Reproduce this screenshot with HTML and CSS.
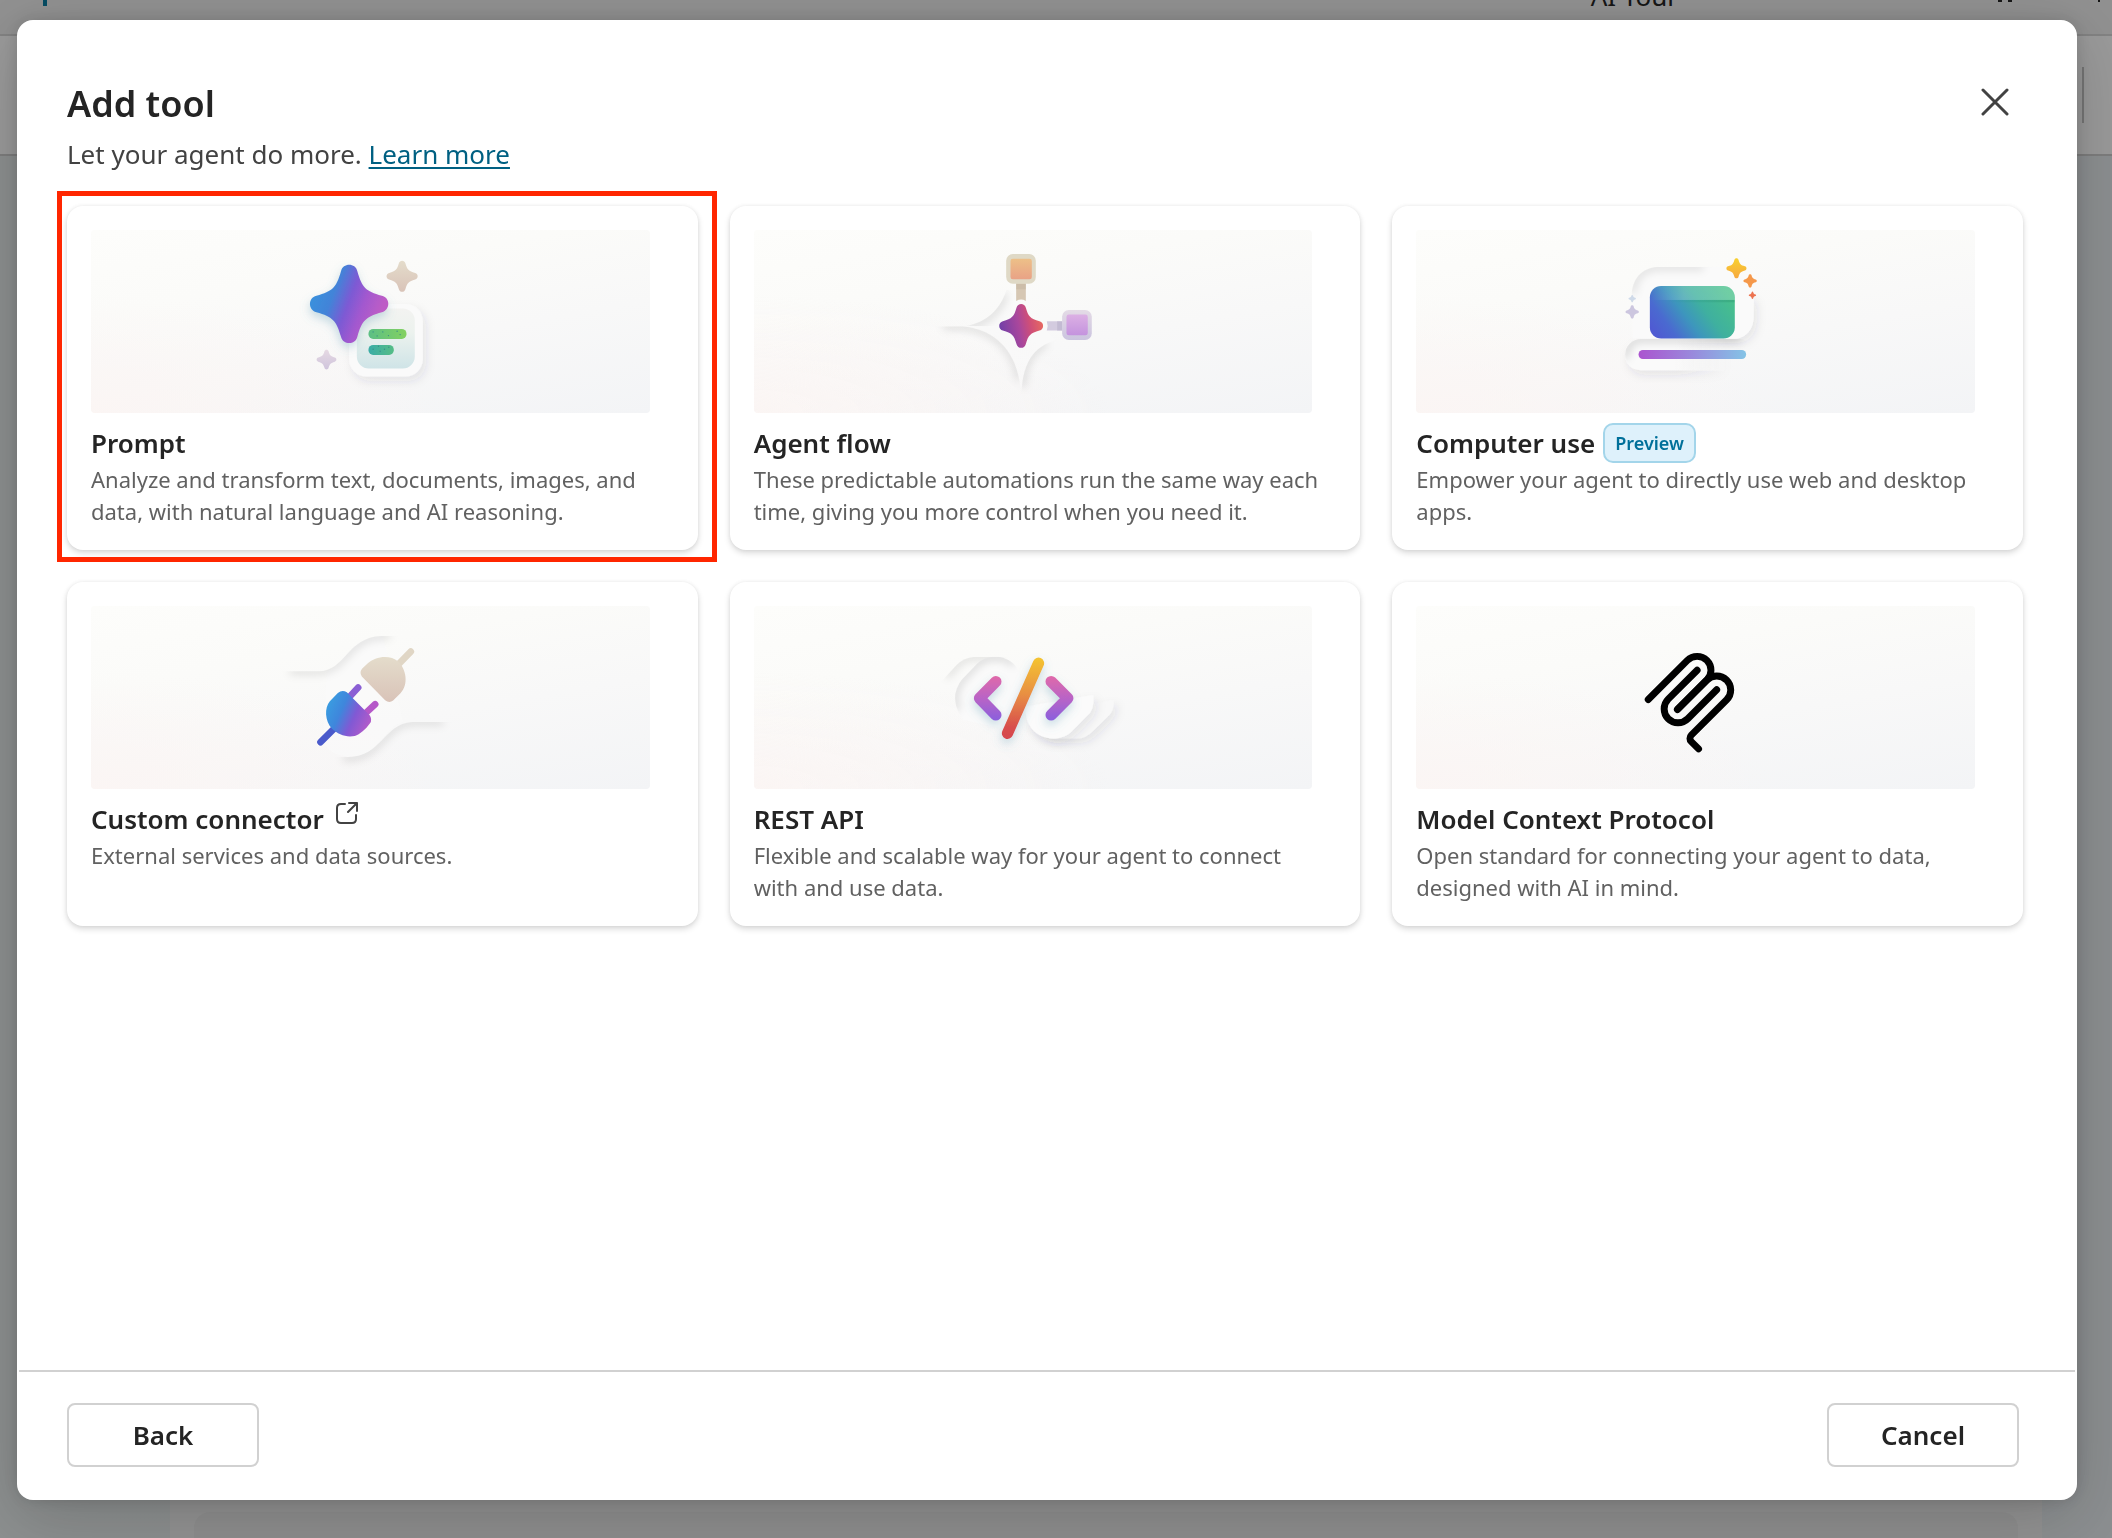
FILE: index.html
```html
<!DOCTYPE html>
<html lang="en">
<head>
<meta charset="utf-8">
<meta name="viewport" content="width=device-width, initial-scale=1">
<title>Add tool</title>
<link rel="stylesheet" href="styles.css">
</head>
<body>
<svg class="defs" aria-hidden="true">
  <defs>
    <path id="star" d="M-21-84C-16-106 16-106 21-84C33-42 42-33 84-21C106-16 106 16 84 21C42 33 33 42 21 84C16 106-16 106-21 84C-33 42-42 33-84 21C-106 16-106-16-84-21C-42-33-33-42-21-84Z"/>
    <linearGradient id="blueviolet" x1="0.1" y1="0.3" x2="0.9" y2="0.6">
      <stop offset="0" stop-color="#3a8fdc"/><stop offset=".25" stop-color="#4383d8"/><stop offset=".5" stop-color="#7c5ad4"/><stop offset=".72" stop-color="#a259cf"/><stop offset="1" stop-color="#bd5cc6"/>
    </linearGradient>
    <linearGradient id="sand" x1="0" y1="0" x2="0" y2="1"><stop offset="0" stop-color="#e4dccb"/><stop offset="1" stop-color="#d9c3b8"/></linearGradient>
    <linearGradient id="lilac" x1="0" y1="0" x2="0" y2="1"><stop offset="0" stop-color="#e6d9e3"/><stop offset="1" stop-color="#cfc4dc"/></linearGradient>
    <linearGradient id="paper" x1="0" y1="0" x2="0" y2="1"><stop offset="0" stop-color="#f3f3f1"/><stop offset=".4" stop-color="#ecf2ee"/><stop offset="1" stop-color="#cfe4e7"/></linearGradient>
    <linearGradient id="greenA" x1="0" y1="0" x2="1" y2="0"><stop offset="0" stop-color="#5cbf85"/><stop offset="1" stop-color="#83d160"/></linearGradient>
    <linearGradient id="greenB" x1="0" y1="0" x2="1" y2="0"><stop offset="0" stop-color="#3aaca6"/><stop offset="1" stop-color="#55bd86"/></linearGradient>
    <linearGradient id="ember" x1="0" y1=".6" x2="1" y2=".4"><stop offset="0" stop-color="#6f3fa8"/><stop offset=".45" stop-color="#a9479c"/><stop offset=".7" stop-color="#cf4f78"/><stop offset="1" stop-color="#e86a60"/></linearGradient>
    <linearGradient id="peach" x1="0" y1="0" x2="0" y2="1"><stop offset="0" stop-color="#edc088"/><stop offset="1" stop-color="#e9a286"/></linearGradient>
    <linearGradient id="orchid" x1="0" y1="0" x2="0" y2="1"><stop offset="0" stop-color="#dcb0e4"/><stop offset="1" stop-color="#c493de"/></linearGradient>
    <linearGradient id="violetEdge" x1="0" y1="0" x2="0" y2="1"><stop offset="0" stop-color="#e4dbe6"/><stop offset="1" stop-color="#cbc4df"/></linearGradient>
    <linearGradient id="screen" x1="0" y1=".75" x2="1" y2=".3"><stop offset="0" stop-color="#4f5bd2"/><stop offset=".18" stop-color="#4a6ad0"/><stop offset=".42" stop-color="#3d96bd"/><stop offset=".65" stop-color="#3fb09f"/><stop offset="1" stop-color="#48c08b"/></linearGradient>
    <linearGradient id="sheen" x1="0" y1="0" x2="1" y2="0"><stop offset="0" stop-color="#fff" stop-opacity="0"/><stop offset=".4" stop-color="#fff" stop-opacity=".2"/><stop offset="1" stop-color="#fff" stop-opacity=".22"/></linearGradient>
    <linearGradient id="crease" x1="0" y1="0" x2="1" y2="0"><stop offset="0" stop-color="#1a7a60" stop-opacity="0"/><stop offset="1" stop-color="#1a7a60" stop-opacity=".25"/></linearGradient>
    <linearGradient id="keys" x1="0" y1="0" x2="1" y2="0"><stop offset="0" stop-color="#ab54cf"/><stop offset=".5" stop-color="#9989dc"/><stop offset="1" stop-color="#84c3e6"/></linearGradient>
    <linearGradient id="gold" x1="0" y1="0" x2="0" y2="1"><stop offset="0" stop-color="#f8d12f"/><stop offset="1" stop-color="#f7a840"/></linearGradient>
    <linearGradient id="base" x1="0" y1="0" x2="1" y2="0"><stop offset="0" stop-color="#fafafa"/><stop offset=".4" stop-color="#fafafa"/><stop offset=".8" stop-color="#fafafa" stop-opacity="0"/></linearGradient>
    <linearGradient id="slash" gradientUnits="userSpaceOnUse" x1="0" y1="143" x2="0" y2="387"><stop offset="0" stop-color="#f4c430"/><stop offset=".45" stop-color="#e88f43"/><stop offset=".85" stop-color="#d84f4d"/><stop offset="1" stop-color="#d5474f"/></linearGradient>
    <linearGradient id="angle" gradientUnits="userSpaceOnUse" x1="0" y1="198" x2="0" y2="332"><stop offset="0" stop-color="#e069a9"/><stop offset=".5" stop-color="#b964c6"/><stop offset="1" stop-color="#8a60dd"/></linearGradient>
    <linearGradient id="plug" gradientUnits="userSpaceOnUse" x1="205" y1="285" x2="335" y2="345"><stop offset="0" stop-color="#3a9be0"/><stop offset=".3" stop-color="#3f86dc"/><stop offset=".6" stop-color="#8159d4"/><stop offset="1" stop-color="#b85bc8"/></linearGradient>
    <filter id="glow" x="-40%" y="-40%" width="180%" height="180%"><feDropShadow dx="-2" dy="14" stdDeviation="14" flood-color="#5a9ab4" flood-opacity=".32"/></filter>
    <filter id="soft" x="-40%" y="-40%" width="180%" height="180%"><feDropShadow dx="10" dy="14" stdDeviation="14" flood-color="#404050" flood-opacity=".1"/></filter>
    <filter id="blur" x="-40%" y="-40%" width="180%" height="180%"><feGaussianBlur stdDeviation="12"/></filter>
  </defs>
</svg>

<div class="page">
  <header class="topbar">
    <span class="topbar-mark"></span>
    <span class="topbar-name">AI Tour</span>
    <span class="topbar-dots"></span>
    <span class="topbar-tick"></span>
  </header>
  <div class="toolbar"><span class="toolbar-rule"></span></div>
  <main class="canvas"><section class="panel"><div class="panel-box"></div></section></main>
</div>
<div class="scrim"></div>

<section class="dialog" role="dialog" aria-modal="true" aria-labelledby="dialog-title">
  <div class="content">
    <header class="head">
      <div>
        <h1 class="title" id="dialog-title">Add tool</h1>
        <p class="subtitle">Let your agent do more. <a class="link" href="#">Learn more</a></p>
      </div>
      <button class="close" type="button" aria-label="Close">
        <svg viewBox="0 0 28 28" width="28" height="28"><path d="M2 2L26 26M26 2L2 26"/></svg>
      </button>
    </header>

    <div class="grid">
      <div class="highlighted">
        <article class="card">
          <svg class="art" viewBox="0 0 559 183" aria-hidden="true"><g transform="translate(199 10) scale(.3333)">
            <rect x="178" y="192" width="221" height="218" rx="52" fill="#fafafa" filter="url(#soft)"/>
            <rect x="201" y="206" width="174" height="180" rx="36" fill="url(#paper)"/>
            <g filter="url(#glow)"><use href="#star" transform="translate(178 192) scale(1.17)" fill="url(#blueviolet)"/></g>
            <use href="#star" transform="translate(337 109) scale(.465)" fill="url(#sand)"/>
            <use href="#star" transform="translate(110 359) scale(.295)" fill="url(#lilac)"/>
            <rect x="236" y="267" width="114" height="30" rx="14" fill="url(#greenA)"/>
            <rect x="236" y="315" width="76" height="30" rx="14" fill="url(#greenB)"/>
            <g fill="#388e8a"><circle cx="250" cy="276" r="2"/><circle cx="262" cy="288" r="2"/><circle cx="279" cy="276" r="2"/><circle cx="296" cy="287" r="2"/><circle cx="322" cy="274" r="2"/><circle cx="331" cy="284" r="2"/><circle cx="250" cy="328" r="2"/><circle cx="266" cy="319" r="2"/><circle cx="271" cy="334" r="2"/><circle cx="284" cy="328" r="2"/><circle cx="297" cy="322" r="2"/></g>
          </g></svg>
          <h2 class="name">Prompt</h2>
          <p class="text">Analyze and transform text, documents, images, and data, with natural language and AI reasoning.</p>
        </article>
      </div>

      <article class="card">
        <svg class="art" viewBox="0 0 559 183" aria-hidden="true">
          <defs>
            <clipPath id="flowB"><path d="M90 289H190C290 300 364 370 364 515H90Z"/></clipPath>
            <clipPath id="flowC"><path d="M364 515C364 400 400 350 468 332V515Z"/></clipPath>
            <clipPath id="flowD"><path d="M200 288C262 276 300 240 320 180L400 180V290Z"/></clipPath>
          </defs>
          <g transform="translate(146 0) scale(.3333)">
            <path d="M200 288C262 276 300 240 320 180L470 330C400 350 364 400 364 500C364 370 290 300 200 288Z" fill="#fafafa" opacity=".4"/>
            <g clip-path="url(#flowD)"><path d="M205 290C262 276 300 240 316 190" fill="none" stroke="#000" stroke-opacity=".13" stroke-width="18" filter="url(#blur)"/></g>
            <g clip-path="url(#flowB)"><path d="M130 289H190C290 300 350 370 358 450" fill="none" stroke="#000" stroke-opacity=".12" stroke-width="18" filter="url(#blur)"/></g>
            <g clip-path="url(#flowC)"><path d="M368 470C366 400 400 355 440 340" fill="none" stroke="#000" stroke-opacity=".12" stroke-width="20" filter="url(#blur)"/></g>
            <path d="M349 160H378V213Q364 205 349 213Z" fill="#d6c7b3"/>
            <path d="M349 160H378V178H349Z" fill="#c2b4a0" opacity=".5"/>
            <rect x="319" y="72" width="89" height="89" rx="20" fill="#dfd9c6"/>
            <rect x="332" y="86" width="64" height="62" rx="7" fill="url(#peach)"/>
            <path d="M441 274H488V302H441Q446 288 441 274Z" fill="#d3cbdf"/>
            <path d="M472 274H488V302H472Z" fill="#b9b0cc" opacity=".6"/>
            <rect x="487" y="240" width="89" height="90" rx="20" fill="url(#violetEdge)"/>
            <rect x="500" y="254" width="64" height="62" rx="7" fill="url(#orchid)"/>
            <use href="#star" transform="translate(364 288) scale(.655)" fill="url(#ember)"/>
          </g></svg>
        <h2 class="name">Agent flow</h2>
        <p class="text">These predictable automations run the same way each time, giving you more control when you need it.</p>
      </article>

      <article class="card">
        <svg class="art" viewBox="0 0 559 183" aria-hidden="true">
          <defs>
            <clipPath id="lapA"><path d="M125 200C125 145 160 111 205 111H400V230H125Z"/></clipPath>
            <clipPath id="lapB"><rect x="106" y="327" width="390" height="94" rx="47"/></clipPath>
            <clipPath id="lapC"><rect x="180" y="168" width="255" height="158" rx="34"/></clipPath>
          </defs>
          <g transform="translate(174 0) scale(.3333)">
            <path d="M491 200V262C491 300 465 326 432 326H200V200Z" fill="#fafafa" filter="url(#soft)"/>
            <path d="M153 421C125 421 106 402 106 374S125 327 153 327H480V421Z" fill="url(#base)" filter="url(#soft)"/>
            <path d="M128 190C128 145 160 111 205 111H440Q491 150 491 210V262C491 300 465 326 432 326H128Z" fill="#fafafa"/>
            <g clip-path="url(#lapA)"><path d="M128 190C128 145 160 111 205 111H340" fill="none" stroke="#000" stroke-opacity=".12" stroke-width="18" filter="url(#blur)"/></g>
            <g clip-path="url(#lapB)"><path d="M108 385C106 350 125 327 153 327H450" fill="none" stroke="#000" stroke-opacity=".16" stroke-width="18" filter="url(#blur)"/></g>
            <rect x="180" y="168" width="255" height="158" rx="34" fill="url(#screen)"/>
            <g clip-path="url(#lapC)"><rect x="180" y="168" width="255" height="42" fill="url(#sheen)"/><rect x="230" y="210" width="205" height="7" fill="url(#crease)"/></g>
            <rect x="146" y="360" width="323" height="27" rx="13" fill="url(#keys)"/>
            <use href="#star" transform="translate(440 115) scale(.3)" fill="url(#gold)"/>
            <use href="#star" transform="translate(481 153) scale(.2)" fill="#f5984a"/>
            <use href="#star" transform="translate(488 196) scale(.11)" fill="#ec7350"/>
            <use href="#star" transform="translate(127 206) scale(.11)" fill="#cfdae9"/>
            <use href="#star" transform="translate(127 246) scale(.2)" fill="#ccc6df"/>
          </g></svg>
        <h2 class="name">Computer use <span class="badge">Preview</span></h2>
        <p class="text">Empower your agent to directly use web and desktop apps.</p>
      </article>

      <article class="card">
        <svg class="art" viewBox="0 0 559 183" aria-hidden="true">
          <defs>
            <clipPath id="waveA"><path d="M60 184H175C260 184 260 78 370 78H430V300H60Z"/></clipPath>
            <clipPath id="waveB"><path d="M200 441H265C370 441 370 336 465 336H600V520H200Z"/></clipPath>
          </defs>
          <g transform="translate(169 4) scale(.3333)">
            <path d="M200 184C260 160 270 78 370 78L430 336C370 350 360 441 265 441Q215 436 190 400Z" fill="#fafafa" opacity=".6"/>
            <g clip-path="url(#waveA)"><path d="M90 184H175C260 184 260 78 370 78H390" fill="none" stroke="#000" stroke-opacity=".12" stroke-width="18" filter="url(#blur)"/></g>
            <g clip-path="url(#waveB)"><path d="M250 444H265C370 441 370 336 465 336H550" fill="none" stroke="#000" stroke-opacity=".12" stroke-width="18" filter="url(#blur)"/></g>
            <path d="M415 164L453 125" stroke="#e0d6c5" stroke-width="20" stroke-linecap="round"/>
            <path d="M306 200Q297 186 308 175L324 160C345 140 390 132 415 155C440 178 447 225 422 250L400 272Q388 281 376 271Z" fill="url(#sand)"/>
            <path d="M182 397L225 354" stroke="#4a5acb" stroke-width="20" stroke-linecap="round"/>
            <path d="M268 262L295 233" stroke="#8a5fd4" stroke-width="20" stroke-linecap="round"/>
            <path d="M315 312L346 283" stroke="#b558c8" stroke-width="20" stroke-linecap="round"/>
            <path d="M234 249Q247 238 261 247L329 315Q339 329 330 341C318 358 300 374 285 378C260 383 235 375 216 356C195 332 193 295 210 274Z" fill="url(#plug)"/>
          </g></svg>
        <h2 class="name">Custom connector
          <svg class="external" viewBox="0 0 22 22" width="22" height="22" aria-hidden="true"><path d="M9 2H5Q1 2 1 6V17Q1 21 5 21H16Q20 21 20 17V13M13 1H21V9M21 1L12 10"/></svg>
        </h2>
        <p class="text">External services and data sources.</p>
      </article>

      <article class="card">
        <svg class="art" viewBox="0 0 559 183" aria-hidden="true">
          <defs>
            <clipPath id="codeA"><path d="M90 220L140 165Q165 141 195 141H320V340H90Z"/></clipPath>
            <clipPath id="codeB"><path d="M160 330L145 305Q122 255 155 210L200 163C230 132 285 134 312 163Q340 190 335 240L300 360Z"/></clipPath>
          </defs>
          <g transform="translate(156 4) scale(.3333)">
            <path d="M612 270Q612 300 600 314L550 363Q527 386 500 386H420Q370 370 360 320Z" fill="#f8f8f8" filter="url(#soft)"/>
            <path d="M550 255Q556 300 530 320L490 360C460 395 395 395 365 355Q345 330 348 290Z" fill="#fbfbfb" filter="url(#soft)"/>
            <g clip-path="url(#codeA)"><path d="M110 200L140 165Q165 141 195 141H270" fill="none" stroke="#000" stroke-opacity=".12" stroke-width="18" filter="url(#blur)"/></g>
            <path d="M160 330L145 305Q122 255 155 210L200 163C230 132 285 134 312 163Q340 190 335 240L300 360Z" fill="#fafafa" opacity=".9"/>
            <g clip-path="url(#codeB)"><path d="M142 300Q122 255 155 210L200 163C230 132 285 134 312 163" fill="none" stroke="#000" stroke-opacity=".14" stroke-width="18" filter="url(#blur)"/></g>
            <g fill="none" stroke-linecap="round" stroke-linejoin="round" filter="url(#glow)">
              <path d="M258 215L209 265L258 315" stroke="url(#angle)" stroke-width="34"/>
              <path d="M424 215L474 265L424 315" stroke="url(#angle)" stroke-width="34"/>
              <path d="M386 160L293 370" stroke="url(#slash)" stroke-width="34"/>
            </g>
          </g></svg>
        <h2 class="name">REST API</h2>
        <p class="text">Flexible and scalable way for your agent to connect with and use data.</p>
      </article>

      <article class="card">
        <svg class="art" viewBox="0 0 559 183" aria-hidden="true"><g transform="translate(184 4) scale(.3333) translate(114 122) scale(1.73)" fill="none" stroke="#000" stroke-width="12" stroke-linecap="round">
          <path d="M18 84.85L85.88 16.97C95.25 7.6 110.45 7.6 119.82 16.97C129.2 26.34 129.2 41.54 119.82 50.91L68.56 102.18"/>
          <path d="M69.27 101.47L119.82 50.91C129.2 41.54 144.39 41.54 153.77 50.91L154.12 51.27C163.49 60.64 163.49 75.83 154.12 85.21L92.72 146.6C89.6 149.72 89.6 154.79 92.72 157.91L105.33 170.52"/>
          <path d="M102.85 33.94L52.65 84.15C43.28 93.52 43.28 108.71 52.65 118.09C62.02 127.46 77.22 127.46 86.59 118.09L136.79 67.88"/>
        </g></svg>
        <h2 class="name">Model Context Protocol</h2>
        <p class="text">Open standard for connecting your agent to data, designed with AI in mind.</p>
      </article>
    </div>
  </div>

  <footer class="foot">
    <button class="btn" type="button">Back</button>
    <button class="btn" type="button">Cancel</button>
  </footer>
</section>
</body>
</html>
```
FILE: styles.css
```css
* { box-sizing: border-box; }

body {
  margin: 0;
  font-family: "Noto Sans", "Open Sans", sans-serif;
  color: #242424;
}

h1, h2, p { margin: 0; }

.defs { position: absolute; width: 0; height: 0; }

/* App behind the dialog */
.page {
  display: flex;
  flex-direction: column;
  height: 100vh;
  overflow: hidden;
}

.topbar {
  display: flex;
  height: 36px;
  padding: 0 12px 0 43px;
  overflow: hidden;
  background: #f0f0f0;
  border-bottom: 2px solid #d8d8d8;
}

.topbar-mark { width: 4px; height: 6px; background: #0a7ea4; }
.topbar-name { margin: -22px 0 0 auto; font-size: 26px; line-height: 36px; }
.topbar-dots { width: 14px; height: 2px; margin-left: 320px; border: solid #242424; border-width: 0 4px; }
.topbar-tick { width: 2px; height: 2px; margin-left: 86px; background: #242424; }

.toolbar {
  display: flex;
  justify-content: flex-end;
  align-items: center;
  height: 120px;
  padding-right: 28px;
  background: #fff;
  border-bottom: 2px solid #d0d0d0;
}

.toolbar-rule { width: 2px; height: 56px; background: #c4c4c4; }

.canvas {
  flex: 1;
  display: flex;
  padding: 24px 70px 0 170px;
  background: linear-gradient(90deg, #e9eeee, #e8edf0);
}

.panel { flex: 1; display: flex; flex-direction: column; justify-content: flex-end; padding: 0 24px; background: #f2f2f2; }
.panel-box { height: 26px; border-radius: 16px 16px 0 0; background: #ebebeb; }

.scrim { position: fixed; inset: 0; background: rgba(0, 0, 0, .4); }

/* Dialog */
.dialog {
  position: fixed;
  inset: 20px 35px 38px 17px;
  display: flex;
  flex-direction: column;
  border: 2px solid #fff;
  border-radius: 16px;
  background: #fff;
  box-shadow: 0 0 16px rgba(0, 0, 0, .14), 0 16px 64px rgba(0, 0, 0, .18);
}

.content { flex: 1; padding: 56px 52px 0 48px; }

.head {
  display: flex;
  justify-content: space-between;
  align-items: flex-start;
  height: 128px;
}

.title { font-size: 36px; line-height: 52px; font-weight: 600; }
.subtitle { font-size: 26px; line-height: 48px; color: #424242; }
.link { color: #006082; text-decoration: underline; text-underline-offset: 3px; text-decoration-thickness: 2px; }

.close {
  display: flex;
  margin: 10px 14px 0 0;
  padding: 0;
  border: 0;
  background: none;
}

.close svg { fill: none; stroke: #424242; stroke-width: 3; stroke-linecap: round; }

.grid {
  display: grid;
  grid-template-columns: repeat(3, 1fr);
  gap: 32px;
}

.highlighted { position: relative; display: grid; }

.highlighted::after {
  content: "";
  position: absolute;
  inset: -15px -19px -12px -10px;
  border: 5px solid #ff2600;
}

.card {
  display: flex;
  flex-direction: column;
  min-height: 344px;
  padding: 24px 24px 22px;
  border-radius: 16px;
  background: #fff;
  box-shadow: 0 0 4px rgba(0, 0, 0, .06), 0 3px 6px rgba(0, 0, 0, .15);
}

.art {
  width: calc(100% - 24px);
  border-radius: 4px;
  background:
    radial-gradient(ellipse at 0% 100%, rgba(252, 245, 243, .8), transparent 45%),
    linear-gradient(170deg, #fdfdfb 0%, #fbfbf9 30%, #f8f8f8 60%, #f3f4f6 100%);
}

.name {
  display: flex;
  align-items: center;
  gap: 8px;
  height: 50px;
  padding: 12px 0 2px;
  font-size: 26px;
  line-height: 36px;
  font-weight: 600;
}

.text { padding-right: 12px; font-size: 22px; line-height: 32px; color: #616161; }

.badge {
  padding: 0 10px;
  border: 2px solid #a3d5ea;
  border-radius: 10px;
  background: #def1fb;
  color: #00709a;
  font-size: 18px;
  line-height: 36px;
}

.external { margin: -12px 0 0 4px; fill: none; stroke: #424242; stroke-width: 2; stroke-linecap: round; stroke-linejoin: round; }

.foot {
  display: flex;
  justify-content: space-between;
  padding: 31px 56px 31px 48px;
  border-top: 2px solid #d1d1d1;
}

.btn {
  width: 192px;
  height: 64px;
  border: 2px solid #d1d1d1;
  border-radius: 8px;
  background: #fff;
  color: #242424;
  font: 600 26px/32px "Noto Sans", "Open Sans", sans-serif;
}
```
